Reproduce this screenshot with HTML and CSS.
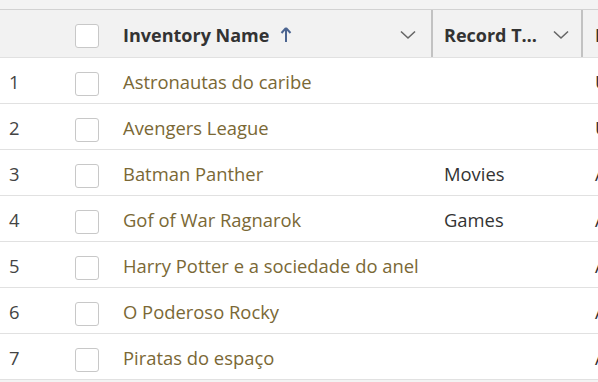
FILE: index.html
```html
<!DOCTYPE html>
<html lang="en">
<head>
    <meta charset="UTF-8">
    <title>Inventory</title>
    <link rel="stylesheet" href="styles.css">
</head>
<body>
    <div class="grid">
        <div class="row head">
            <div class="cell num"></div>
            <div class="cell check"><span class="box"></span></div>
            <div class="cell col name-col">
                <span class="title">Inventory Name</span>
                <svg class="sort" width="12" height="16" viewBox="0 0 12 16"><path d="M6 1 L1.5 6 M6 1 L10.5 6 M6 1 V15" stroke="#4b6490" stroke-width="2" fill="none"/></svg>
                <svg class="chev" width="16" height="10" viewBox="0 0 16 10"><path d="M1 1.5 L8 8 L15 1.5" stroke="#666" stroke-width="1.6" fill="none"/></svg>
            </div>
            <div class="cell col type-col">
                <span class="title">Record Type</span>
                <svg class="chev" width="16" height="10" viewBox="0 0 16 10"><path d="M1 1.5 L8 8 L15 1.5" stroke="#666" stroke-width="1.6" fill="none"/></svg>
            </div>
            <div class="cell col last"><span class="title">Inventory Status</span></div>
        </div>

        <div class="row">
            <div class="cell num">1</div>
            <div class="cell check"><span class="box"></span></div>
            <div class="cell name">Astronautas do caribe</div>
            <div class="cell type"></div>
            <div class="cell rest">Unavailable</div>
        </div>
        <div class="row">
            <div class="cell num">2</div>
            <div class="cell check"><span class="box"></span></div>
            <div class="cell name">Avengers League</div>
            <div class="cell type"></div>
            <div class="cell rest">Unavailable</div>
        </div>
        <div class="row">
            <div class="cell num">3</div>
            <div class="cell check"><span class="box"></span></div>
            <div class="cell name">Batman Panther</div>
            <div class="cell type">Movies</div>
            <div class="cell rest">Available</div>
        </div>
        <div class="row">
            <div class="cell num">4</div>
            <div class="cell check"><span class="box"></span></div>
            <div class="cell name">Gof of War Ragnarok</div>
            <div class="cell type">Games</div>
            <div class="cell rest">Available</div>
        </div>
        <div class="row">
            <div class="cell num">5</div>
            <div class="cell check"><span class="box"></span></div>
            <div class="cell name">Harry Potter e a sociedade do anel</div>
            <div class="cell type"></div>
            <div class="cell rest">Available</div>
        </div>
        <div class="row">
            <div class="cell num">6</div>
            <div class="cell check"><span class="box"></span></div>
            <div class="cell name">O Poderoso Rocky</div>
            <div class="cell type"></div>
            <div class="cell rest">Available</div>
        </div>
        <div class="row">
            <div class="cell num">7</div>
            <div class="cell check"><span class="box"></span></div>
            <div class="cell name">Piratas do espaço</div>
            <div class="cell type"></div>
            <div class="cell rest">Available</div>
        </div>
    </div>
</body>
</html>
```

FILE: styles.css
```css
/* --- Page --- */
html, body {
    margin: 0;
    overflow: hidden;
}

body {
    font-family: 'Open Sans', 'Noto Sans', sans-serif;
    background-color: #f3f3f3;
    color: #333;
    padding-top: 9px;
}

/* --- Grid --- */
.grid {
    border-top: 1px solid #d2d2d2;
    background-color: #fff;
    width: 760px;
}

.row {
    display: grid;
    grid-template-columns: 63px 48px 322px 150px 177px;
    height: 46px;
    border-bottom: 1px solid #e1e1e1;
    box-sizing: border-box;
}

.row.head {
    height: 48px;
    background-color: #f2f2f2;
    border-bottom: 1px solid #e1e1e1;
}

.cell {
    display: flex;
    align-items: center;
    font-size: 18.4px;
    white-space: nowrap;
    overflow: hidden;
    min-width: 0;
    padding-top: 1px;
}

.head .cell {
    padding-top: 3px;
}

.num {
    padding-left: 9px;
    color: #444;
}

.check {
    padding-left: 12px;
    padding-top: 6px;
}

.head .check {
    padding-top: 5px;
}

.box {
    width: 22px;
    height: 22px;
    border: 1px solid #c8c8c8;
    border-radius: 3px;
    background-color: #fff;
}

/* --- Header columns --- */
.col {
    border-right: 2px solid #c2c2c2;
    padding-left: 12px;
    padding-right: 15px;
}

.col.last {
    border-right: none;
}

.type-col {
    padding-left: 11px;
    padding-right: 12px;
}

.title {
    font-size: 18px;
    font-weight: 700;
    color: #333;
    overflow: hidden;
    text-overflow: ellipsis;
}

.sort {
    margin-left: 11px;
    flex-shrink: 0;
}

.chev {
    margin-left: auto;
    flex-shrink: 0;
}

.type-col .chev {
    margin-left: 10px;
}

/* --- Body cells --- */
.name {
    padding-left: 12px;
    color: #7a6835;
}

.type {
    padding-left: 11px;
    color: #333;
}

.rest {
    padding-left: 12px;
    color: #333;
}
```
